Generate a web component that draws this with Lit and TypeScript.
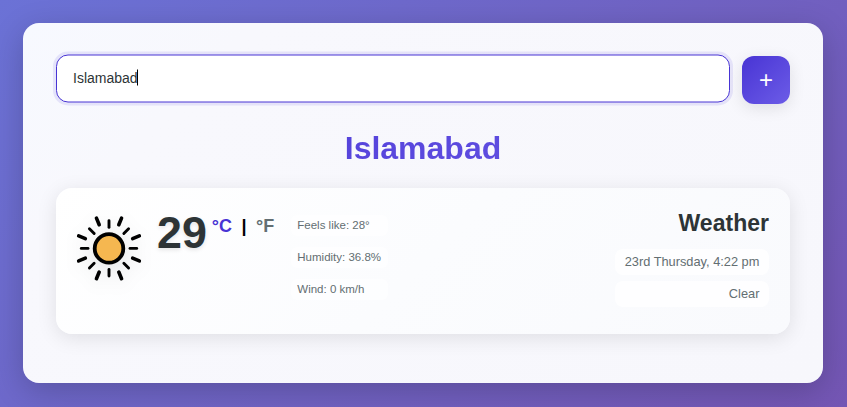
import { LitElement, html, css, svg } from "lit";
import { customElement, state } from "lit/decorators.js";
import { classMap } from "lit/directives/class-map.js";

@customElement("sun-icon")
class SunIcon extends LitElement {
  static styles = css`
    :host { display: block; width: 72px; height: 72px; filter: drop-shadow(0 4px 8px rgba(0, 0, 0, 0.1)); }
    svg { display: block; width: 100%; height: 100%; }
    .ray { stroke: #000; stroke-linecap: round; }
    .disc { fill: #f5b750; stroke: #000; stroke-width: 3.8; }
  `;

  render() {
    const rays = Array.from({ length: 16 }, (_, i) => {
      const long = i % 2 === 1;
      return svg`<line class="ray" x1="0" x2="0" y1=${long ? -32.8 : -27.7} y2=${long ? -25.6 : -21}
        stroke-width=${long ? 3.6 : 2.9} transform="rotate(${i * 22.5})"></line>`;
    });
    return html`<svg viewBox="-36 -36.4 72 72">${rays}<circle class="disc" r="14.3"></circle></svg>`;
  }
}

@customElement("app-root")
class AppRoot extends LitElement {
  @state() private unit = "C";

  static styles = css`
    :host {
      display: block;
      box-sizing: border-box;
      height: 407px;
      padding: 23px 24px 24px 23px;
      overflow: hidden;
      background: linear-gradient(135deg, #6b72d6 0%, #7456b4 100%);
      font-family: "Liberation Sans", Arial, sans-serif;
      color: #2d3436;
    }
    * { box-sizing: border-box; }
    .card {
      height: 360px;
      padding: 33px;
      border-radius: 16px;
      background: linear-gradient(135deg, #f7f9ff 0%, #f8f8fd 20%, #f7f7fc 100%);
      box-shadow: 0 8px 32px rgba(0, 0, 0, 0.2);
    }
    .search { display: flex; gap: 12px; height: 48px; }
    .field {
      flex: 1;
      display: flex;
      align-items: center;
      height: 48px;
      padding: 0 16px 2px;
      border: 1px solid #4834d4;
      border-radius: 12px;
      background: #fff;
      font-size: 14px;
      box-shadow: 0 0 0 3px rgba(72, 52, 212, 0.1);
      transform: translateY(-1.5px);
    }
    .caret { width: 1px; height: 16px; margin-left: -1px; background: #000; }
    .add {
      display: flex;
      align-items: center;
      justify-content: center;
      width: 48px;
      height: 48px;
      padding: 0;
      border: 0;
      border-radius: 12px;
      background: linear-gradient(135deg, #4834d4, #6c5ce7);
      box-shadow: 0 4px 16px rgba(0, 0, 0, 0.1);
      color: #fff;
      font: 24px "Liberation Sans", Arial, sans-serif;
    }
    h1 {
      margin: 26px 0 22px;
      font-size: 32px;
      line-height: 36px;
      text-align: center;
      color: transparent;
      background: linear-gradient(135deg, #4834d4, #6c5ce7);
      background-clip: text;
      -webkit-background-clip: text;
    }
    .panel {
      display: flex;
      justify-content: space-between;
      height: 146px;
      padding: 21px;
      border-radius: 16px;
      background: linear-gradient(135deg, #fff 0%, #fbfcfe 50%, #f9fafd 100%);
      box-shadow: 0 4px 20px rgba(0, 0, 0, 0.1);
    }
    .now { display: flex; align-items: flex-start; }
    sun-icon { margin: 3px 12px 0 -4px; }
    .degrees { font-size: 44.8px; font-weight: 700; line-height: 46px; text-shadow: 0 2px 4px rgba(0, 0, 0, 0.1); }
    .units { display: flex; margin: 6px 0 0 5px; font-size: 18px; line-height: 22px; font-weight: 700; color: #000; white-space: pre; }
    .unit { color: #636e72; }
    .unit.active { color: #4834d4; }
    .bar { margin: 0 9.5px; }
    .facts { display: flex; flex-direction: column; gap: 11px; margin: 6px 0 0 16.6px; }
    .fact { height: 21px; padding: 0 6.4px; border-radius: 6px; background: rgba(255, 255, 255, 0.6); font-size: 11.52px; line-height: 21px; color: #636e72; }
    .summary { text-align: right; }
    h2 { margin: 0 0 12px; font-size: 23.04px; line-height: 28px; }
    .line { height: 26px; margin-bottom: 6px; padding: 0 9.6px; border-radius: 8px; background: rgba(255, 255, 255, 0.8); font-size: 12.8px; line-height: 26px; color: #636e72; }
  `;

  render() {
    const unit = (name: string) => html`<span
      class=${classMap({ unit: true, active: this.unit === name })}
      @click=${() => (this.unit = name)}>°${name}</span>`;
    return html`
      <main class="card">
        <div class="search">
          <div class="field"><span>Islamabad</span><i class="caret"></i></div>
          <button class="add">+</button>
        </div>
        <h1>Islamabad</h1>
        <section class="panel">
          <div class="now">
            <sun-icon></sun-icon>
            <span class="degrees">29</span>
            <div class="units">${unit("C")}<span class="bar">|</span>${unit("F")}</div>
            <div class="facts">
              ${["Feels like: 28°", "Humidity: 36.8%", "Wind: 0 km/h"].map((t) => html`<div class="fact">${t}</div>`)}
            </div>
          </div>
          <div class="summary">
            <h2>Weather</h2>
            <div class="line">23rd Thursday, 4:22 pm</div>
            <div class="line">Clear</div>
          </div>
        </section>
      </main>
    `;
  }
}
